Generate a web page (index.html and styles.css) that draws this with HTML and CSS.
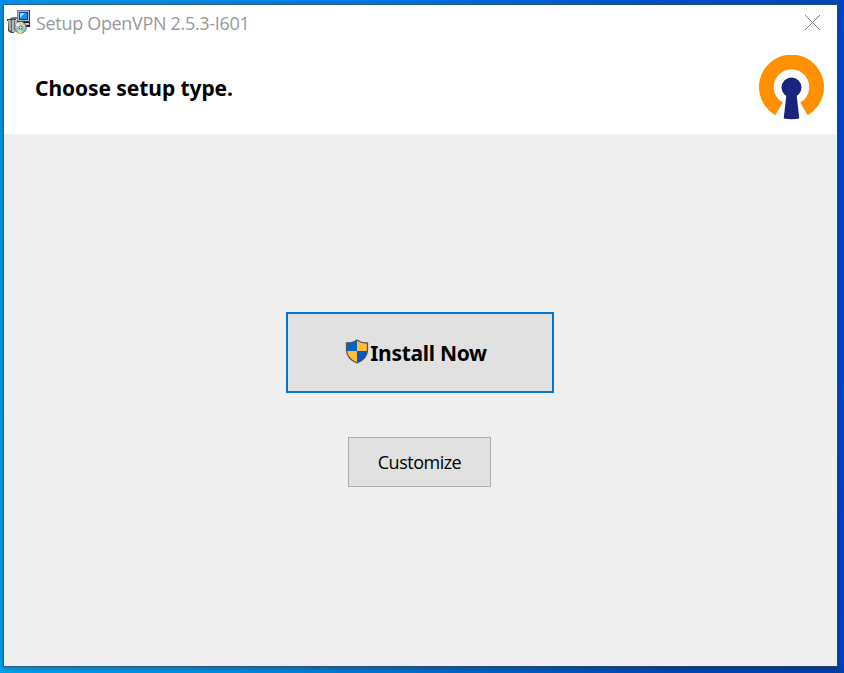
FILE: index.html
```html
<!DOCTYPE html>
<html lang="en">
<head>
<meta charset="utf-8">
<title>Setup OpenVPN 2.5.3-I601</title>
<link rel="stylesheet" href="styles.css">
</head>
<body>
<main class="window">
  <header class="header">
    <div class="titlebar">
      <svg class="app-icon" width="24" height="24" viewBox="0 0 24 24">
        <path d="M0 9h9v5H7v9H4l-3-2V11H0z" fill="#444"/>
        <path d="M1 10h3v11l-2-1z" fill="#aaa"/>
        <path d="M5 10h5v12H5z" fill="#b4b4b4"/>
        <path d="M3 8l3-1h5v2H3z" fill="#777"/>
        <path d="M4.500 11v11M7.500 11v9" stroke="#666"/>
        <path d="M10 0h13v11H10z" fill="#b8bcc8"/>
        <path d="M10.500 11V.5H23" fill="none" stroke="#777c8c"/>
        <path d="M22.500 0v11.500H10" fill="none" stroke="#333"/>
        <path d="M12 2h9v8h-9z" fill="#0b32c8"/>
        <path d="M13 3h7v6h-7z" fill="#168df0"/>
        <path d="M13 3h5l-5 5z" fill="#8deaff"/>
        <path d="M14 12h9v5h-5z" fill="#222"/>
        <path d="M14 13h8v2h-8z" fill="#ccc"/>
        <circle cx="13.500" cy="17.500" r="5.700" fill="#c4c4c4" stroke="#666"/>
        <path d="M13.500 17.500L8 15l3-3z" fill="#eee"/>
        <path d="M13.500 17.500L12 12h4z" fill="#d9df82"/>
        <path d="M13.500 17.500L19 19l-3 3z" fill="#55d7d5"/>
        <path d="M13.500 17.500L15 23h-4z" fill="#e8e486"/>
        <path d="M13.500 17.500L8 18l2 3z" fill="#8ac9bd"/>
        <circle cx="13.500" cy="17.500" r="1.500" fill="#fff" stroke="#555"/>
      </svg>
      <span class="title">Setup OpenVPN 2.5.3-I601</span>
      <svg class="close" width="15" height="15" viewBox="0 0 15 15"><path d="M0 0l15 15M15 0L0 15" stroke="#7c7c7c" fill="none"/></svg>
    </div>
    <div class="banner">
      <h1 class="heading">Choose setup type.</h1>
      <svg class="logo" width="66" height="66" viewBox="0.5 0 66 66">
        <path d="M16.800 60.200A32.500 32.500 0 1 1 49.200 60.200L41.700 47.600A17.800 17.800 0 1 0 24.300 47.600Z" fill="#ff9100"/>
        <path d="M28 39h10l2.800 24.500q-7.800 1.500-15.600 0z" fill="#1a237e"/>
        <circle cx="33" cy="32.500" r="10" fill="#1a237e"/>
      </svg>
    </div>
  </header>
  <section class="content">
    <button class="button install">
      <svg class="shield" width="24" height="25" viewBox="0 0 24 25">
        <path d="M12 1Q8 4 1.500 4V12H12Z" fill="#0067c8"/>
        <path d="M12 1Q16 4 22.500 4V12H12Z" fill="#ffbd36"/>
        <path d="M1.500 12Q2 20 12 24V12Z" fill="#ffbd36"/>
        <path d="M22.500 12Q22 20 12 24V12Z" fill="#0059c0"/>
        <path d="M12 1Q8 4 1.500 4V11C1.500 17 5 21 12 24C19 21 22.500 17 22.500 11V4Q16 4 12 1Z" fill="none" stroke="#505459" stroke-width="1.300"/>
      </svg>
      <span class="install-label">Install Now</span>
    </button>
    <button class="button customize"><span class="customize-label">Customize</span></button>
  </section>
</main>
</body>
</html>
```
FILE: styles.css
```css
* { box-sizing: border-box; }
body {
  margin: 0;
  height: 673px;
  padding: 5px 7px 7px 4px;
  overflow: hidden;
  background:
    linear-gradient(90deg, #00a0ea 0%, #0086d5 30%, #0069c2 52%, #0047ad 80%, #003fa8 100%) 0 100% / 100% 8px no-repeat,
    linear-gradient(90deg, #0091e5 0%, #0087e0 22%, #0070dc 50%, #0050c4 78%, #0047b9 100%) 0 0 / 100% 5px no-repeat,
    linear-gradient(#0047bd, #0044b8) 100% 0 / 8px 100% no-repeat,
    linear-gradient(#008fe2, #0099e6) 0 0 / 5px 100% no-repeat;
  font-family: "Noto Sans", "Open Sans", sans-serif;
}
.window {
  display: flex;
  flex-direction: column;
  height: 661px;
  background: #efefef;
  box-shadow: 0 0 0 1px rgba(70, 75, 80, .6), 0 2px 5px rgba(0, 0, 0, .25);
}
.header { height: 129px; background: #fff; }
.titlebar { display: flex; align-items: flex-start; height: 38px; padding: 5px 17px 0 3px; }
.title {
  margin: 0 0 0 5px;
  font-family: "Open Sans", sans-serif;
  font-size: 18px;
  line-height: 26px;
  letter-spacing: -.32px;
  color: #999;
  white-space: nowrap;
}
.close { margin: 5px 0 0 auto; }
.banner { display: flex; justify-content: space-between; padding: 12px 12px 0 31px; }
.heading { margin: 18px 0 0; font-size: 21px; line-height: 30px; font-weight: 700; letter-spacing: -.08px; color: #000; white-space: nowrap; }
.content { display: flex; flex-direction: column; align-items: center; padding-top: 178px; }
.button {
  display: flex;
  align-items: center;
  justify-content: center;
  padding: 0;
  background: #e1e1e1;
  color: #000;
  font-family: inherit;
  white-space: nowrap;
}
.install { width: 268px; height: 81px; border: 2px solid #0078d7; margin-right: 1px; padding-right: 8px; }
.shield { margin-bottom: 2px; }
.install-label { font-size: 21px; line-height: 30px; font-weight: 700; letter-spacing: -.3px; margin-left: 1px; }
.customize { width: 143px; height: 50px; margin: 44px 2px 0 0; border: 1px solid #adadad; }
.customize-label { font-family: "Open Sans", sans-serif; font-size: 18px; line-height: 26px; letter-spacing: -.5px; }
```
